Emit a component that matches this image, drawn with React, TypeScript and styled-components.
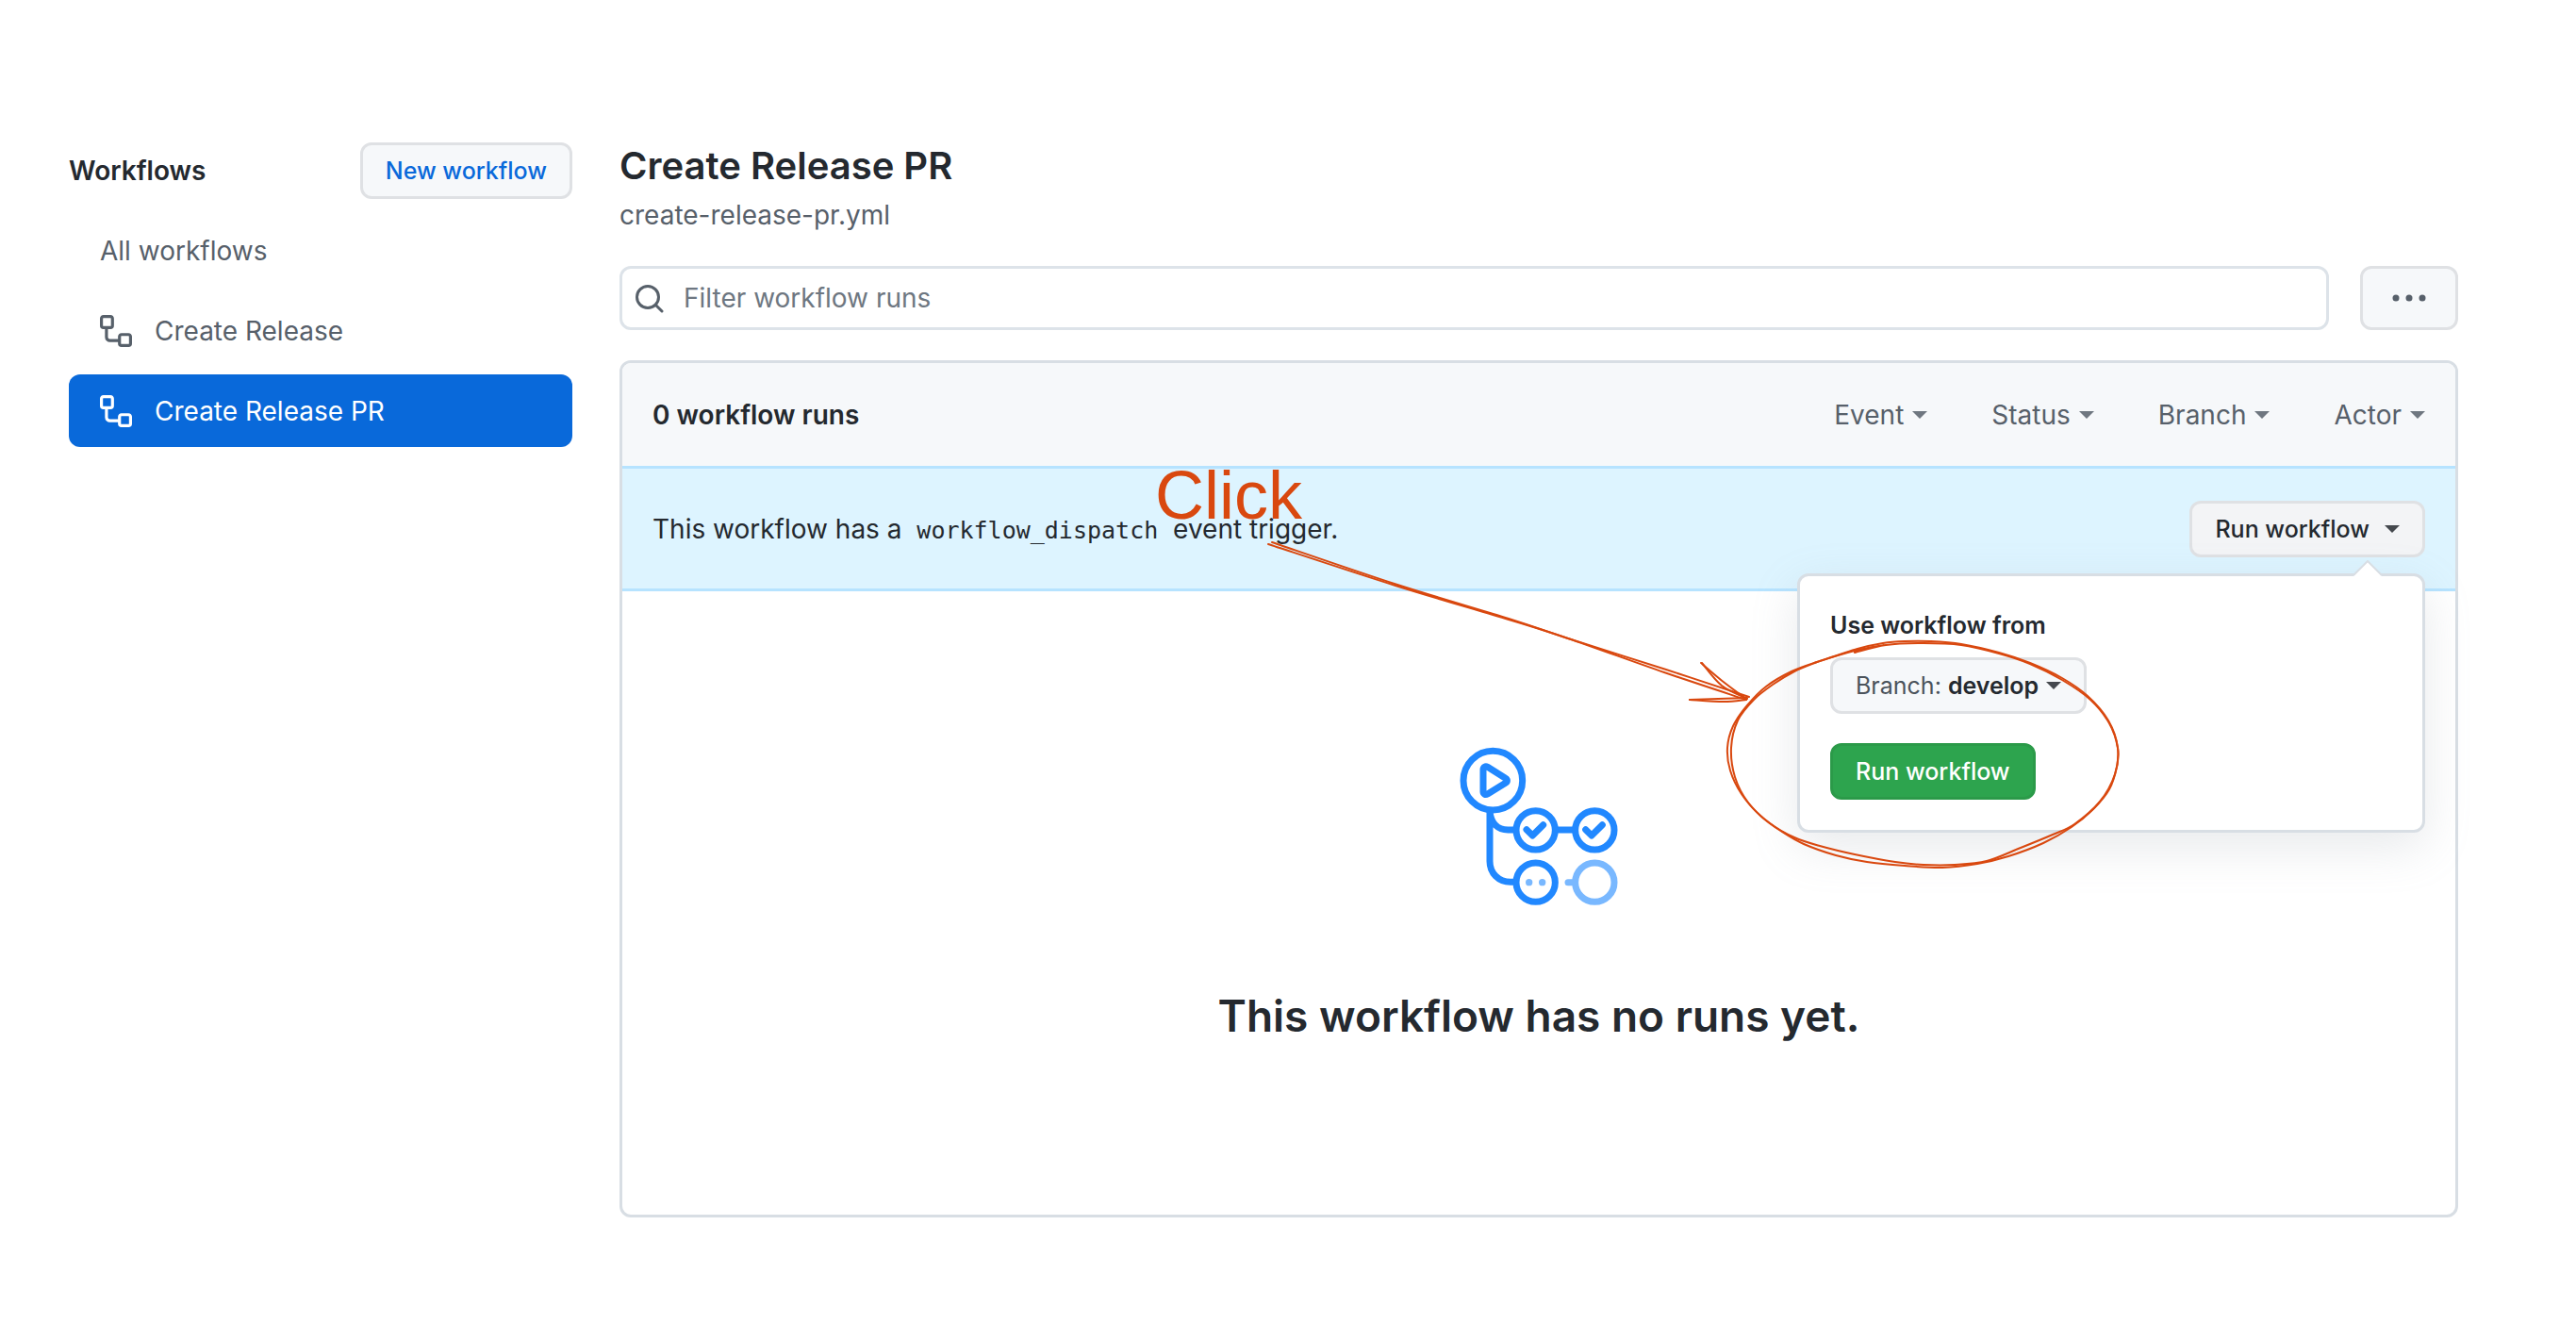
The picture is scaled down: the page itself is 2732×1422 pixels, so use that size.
import React from "react";
import styled, { createGlobalStyle } from "styled-components";

const Global = createGlobalStyle`
  *, *::before, *::after { box-sizing: border-box; }
  body { margin: 0; background: #fff; color: #24292f; font: 28px/42px Inter, "Noto Sans", sans-serif; }
  h1, h2, p, ul { margin: 0; padding: 0; }
  button, input { font: inherit; color: inherit; }
`;

const Page = styled.div`
  position: relative;
  display: grid;
  grid-template-columns: 534px minmax(0, 1fr);
  gap: 50px;
  padding: 151px 125px 132px 73px;
`;

const SideHead = styled.div`
  display: flex;
  align-items: center;
  justify-content: space-between;
  height: 60px;
  margin-bottom: 16px;
`;

const SideTitle = styled.h2`
  font-size: 28px;
  font-weight: 600;
`;

const Button = styled.button<{ $tone?: "link" | "green" | "muted" | "hover" }>`
  display: inline-flex;
  align-items: center;
  gap: ${(p) => (p.$tone === "muted" ? 8 : 16)}px;
  height: 60px;
  padding: 0 24px;
  border: 3px solid ${(p) => (p.$tone === "green" ? "#2b9a49" : "#dfe1e4")};
  border-radius: 12px;
  background: ${(p) => (p.$tone === "green" ? "#2da44e" : p.$tone === "hover" ? "#f3f4f6" : "#f6f8fa")};
  color: ${(p) => (p.$tone === "green" ? "#fff" : p.$tone === "link" ? "#0969da" : "#24292f")};
  font-size: 25px;
  font-weight: ${(p) => (p.$tone === "muted" ? 400 : 500)};
  white-space: nowrap;
`;

const NavList = styled.ul`
  display: flex;
  flex-direction: column;
  gap: 8px;
  list-style: none;
`;

const NavLink = styled.a<{ $active?: boolean }>`
  display: flex;
  align-items: center;
  gap: 24px;
  height: 77px;
  padding: 0 33px;
  border-radius: 12px;
  background: ${(p) => (p.$active ? "#0969da" : "transparent")};
  color: ${(p) => (p.$active ? "#fff" : "#57606a")};
  text-decoration: none;
`;

const Title = styled.h1`
  font-size: 40px;
  line-height: 50px;
  font-weight: 600;
`;

const FileName = styled.p`
  margin-top: 6px;
  color: #57606a;
`;

const FilterRow = styled.div`
  display: flex;
  gap: 33px;
  margin-top: 33px;
`;

const SearchBox = styled.label`
  display: flex;
  flex: 1;
  align-items: center;
  gap: 20px;
  height: 68px;
  padding: 0 14px;
  border: 3px solid #dde3e9;
  border-radius: 12px;
  color: #57606a;
`;

const SearchInput = styled.input`
  flex: 1;
  min-width: 0;
  padding: 0;
  border: 0;
  outline: 0;
  background: transparent;
  &::placeholder { color: #6e7781; opacity: 1; }
`;

const MoreButton = styled.button`
  display: grid;
  place-items: center;
  width: 104px;
  border: 3px solid #dfe1e4;
  border-radius: 12px;
  background: #f6f8fa;
  color: #57606a;
`;

const RunsBox = styled.section`
  margin-top: 32px;
  border: 3px solid #d8dee4;
  border-radius: 12px;
`;

const BoxHead = styled.div`
  display: flex;
  align-items: center;
  justify-content: space-between;
  height: 109px;
  padding: 0 32px;
  border-radius: 9px 9px 0 0;
  background: #f6f8fa;
`;

const Count = styled.strong`
  font-weight: 600;
`;

const Filters = styled.div`
  display: flex;
  gap: 68px;
`;

const FilterButton = styled.button`
  display: flex;
  align-items: center;
  gap: 9px;
  padding: 0;
  border: 0;
  background: transparent;
  color: #57606a;
`;

const Caret = styled.span`
  border: 8px solid transparent;
  border-top-color: currentColor;
  border-bottom: 0;
  opacity: 0.85;
`;

const Banner = styled.div`
  position: relative;
  display: flex;
  align-items: center;
  justify-content: space-between;
  height: 133px;
  padding: 0 32px;
  border: solid #b6e3ff;
  border-width: 3px 0;
  background: #ddf4ff;
`;

const Code = styled.code`
  margin: 0 8px;
  font: 25px "DejaVu Sans Mono", monospace;
`;

const Popover = styled.div`
  position: absolute;
  z-index: 1;
  top: 111px;
  right: 32px;
  display: flex;
  flex-direction: column;
  align-items: flex-start;
  width: 666px;
  padding: 32px;
  border: 3px solid #d8dee4;
  border-radius: 12px;
  background: #fff;
  box-shadow: 0 16px 50px rgba(140, 149, 159, 0.2);
`;

const Pointer = styled.svg`
  position: absolute;
  top: -17px;
  right: 42px;
`;

const PopTitle = styled.p`
  margin-bottom: 14px;
  font-size: 25px;
  line-height: 40px;
  font-weight: 600;
`;

const PopButtons = styled.div`
  display: flex;
  flex-direction: column;
  align-items: flex-start;
  gap: 31px;
`;

const Branch = styled.span`
  color: #4b535b;
  & strong { color: #24292f; font-weight: 600; }
`;

const Empty = styled.div`
  display: flex;
  flex-direction: column;
  align-items: center;
  gap: 80px;
  padding: 165px 32px 175px;
`;

const EmptyTitle = styled.h2`
  font-size: 46px;
  line-height: 72px;
  font-weight: 600;
`;

const Sketch = styled.svg`
  position: absolute;
  z-index: 2;
  top: 560px;
  left: 1330px;
  pointer-events: none;
`;

const ClickNote = styled.span`
  position: absolute;
  z-index: 2;
  top: 485px;
  left: 1225px;
  color: #d9480f;
  font: 72px/80px "Liberation Sans", Arial, sans-serif;
`;

const WorkflowIcon = () => (
  <svg width="34" height="34" viewBox="0 0 16 16" fill="currentColor" aria-hidden="true">
    <path fillRule="evenodd" d="M0 1.75C0 .784.784 0 1.75 0h3.5C6.216 0 7 .784 7 1.75v3.5A1.75 1.75 0 015.25 7H4v4a1 1 0 001 1h4v-1.25C9 9.784 9.784 9 10.75 9h3.5c.966 0 1.75.784 1.75 1.75v3.5A1.75 1.75 0 0114.25 16h-3.5A1.75 1.75 0 019 14.25v-.75H5A2.500 2.500 0 012.500 11V7h-.75A1.750 1.750 0 010 5.250v-3.500zm1.750-.250a.25.25 0 00-.25.25v3.500c0 .138.112.25.25.25h3.500a.25.25 0 00.25-.25v-3.500a.25.25 0 00-.25-.25h-3.500zm9 9a.25.25 0 00-.25.25v3.500c0 .138.112.25.25.25h3.500a.25.25 0 00.25-.25v-3.500a.25.25 0 00-.25-.25h-3.500z" />
  </svg>
);

const SearchIcon = () => (
  <svg width="31" height="31" viewBox="0 0 31 31" fill="none" stroke="currentColor" strokeWidth="3" strokeLinecap="round" aria-hidden="true">
    <circle cx="13" cy="14" r="11.500" />
    <path d="M21.500 22.500L28 29" />
  </svg>
);

const RunsGraphic = () => (
  <svg width="168" height="169" viewBox="84 66 504 507" fill="none" stroke="#2188ff" strokeWidth="21" strokeLinecap="round" strokeLinejoin="round" aria-hidden="true">
    <circle cx="190" cy="173" r="94" />
    <path d="M159 138v70c0 8 7 12 14 8l57-35c7-4 7-11 0-15l-57-36c-7-4-14 0-14 8z" />
    <path d="M180 272v158c0 38 28 66 66 66h16M180 272c4 38 26 58 58 58h24M392 330h56" strokeLinecap="butt" />
    <circle cx="326" cy="331" r="62" />
    <circle cx="514" cy="331" r="62" />
    <circle cx="326" cy="497" r="62" />
    <path d="M297 329l19 19 34-34M485 329l19 19 34-34" />
    <g stroke="#79b8ff">
      <circle cx="514" cy="497" r="62" />
      <path d="M429 497h14" />
    </g>
    <g fill="#79b8ff" stroke="none">
      <circle cx="305" cy="497" r="11" />
      <circle cx="347" cy="497" r="11" />
    </g>
  </svg>
);

type Point = [number, number];

const smooth = (pts: Point[]) =>
  pts.slice(1).reduce((d, p, i) => {
    const a = pts[i];
    const before = pts[i - 1] ?? a;
    const after = pts[i + 2] ?? p;
    const c1 = [a[0] + (p[0] - before[0]) / 6, a[1] + (p[1] - before[1]) / 6];
    const c2 = [p[0] - (after[0] - a[0]) / 6, p[1] - (after[1] - a[1]) / 6];
    return `${d}C${c1.join(" ")} ${c2.join(" ")} ${p.join(" ")}`;
  }, `M${pts[0].join(" ")}`);

const strokes: Point[][] = [
  // arrow shaft, drawn twice
  [[1349, 575], [1482, 620], [1600, 656], [1663, 677], [1767, 710], [1855, 739]],
  [[1345, 577], [1480, 621], [1600, 657], [1663, 677], [1765, 713], [1852, 742]],
  // arrow head
  [[1804, 703], [1829, 724], [1852, 741]],
  [[1805, 703], [1826, 727], [1853, 741]],
  [[1792, 742], [1828, 744], [1852, 742]],
  [[1792, 742], [1853, 740]],
  // ring, drawn twice
  [[1967, 692], [2000, 684], [2040, 682], [2080, 684], [2120, 693], [2153, 704], [2187, 721], [2217, 742], [2237, 767], [2246, 793], [2245, 813], [2237, 837], [2220, 858], [2197, 877], [2167, 894], [2130, 908], [2097, 916], [2060, 920], [2020, 918], [1980, 914], [1947, 907], [1913, 895], [1890, 882], [1867, 865], [1847, 842], [1835, 817], [1832, 793], [1838, 770], [1853, 748], [1873, 728], [1900, 712], [1927, 702], [1967, 690], [1998, 684]],
  [[1927, 702], [1970, 688], [1997, 682], [2020, 680], [2047, 680], [2080, 683], [2120, 692], [2153, 703], [2187, 719], [2214, 738], [2236, 764], [2246, 793], [2243, 821], [2227, 850], [2200, 874], [2177, 885], [2143, 899], [2107, 913], [2073, 917], [2040, 917], [2010, 914], [1967, 906], [1930, 897], [1903, 888], [1877, 873], [1854, 851], [1840, 824], [1836, 793], [1843, 764], [1860, 742], [1880, 726], [1903, 712], [1927, 702]],
];

const navItems = [
  { label: "All workflows", icon: false },
  { label: "Create Release", icon: true },
  { label: "Create Release PR", icon: true, active: true },
];

export default function App() {
  return (
    <Page>
      <Global />
      <aside>
        <SideHead>
          <SideTitle>Workflows</SideTitle>
          <Button $tone="link">New workflow</Button>
        </SideHead>
        <nav>
          <NavList>
            {navItems.map((item) => (
              <li key={item.label}>
                <NavLink href="#" $active={item.active}>
                  {item.icon && <WorkflowIcon />}
                  {item.label}
                </NavLink>
              </li>
            ))}
          </NavList>
        </nav>
      </aside>
      <main>
        <Title>Create Release PR</Title>
        <FileName>create-release-pr.yml</FileName>
        <FilterRow>
          <SearchBox>
            <SearchIcon />
            <SearchInput type="text" placeholder="Filter workflow runs" aria-label="Filter workflow runs" />
          </SearchBox>
          <MoreButton aria-label="More options">
            <svg width="36" height="8" viewBox="0 0 36 8" fill="currentColor">
              <circle cx="4" cy="4" r="3.500" />
              <circle cx="18" cy="4" r="3.500" />
              <circle cx="32" cy="4" r="3.500" />
            </svg>
          </MoreButton>
        </FilterRow>
        <RunsBox>
          <BoxHead>
            <Count>0 workflow runs</Count>
            <Filters>
              {["Event", "Status", "Branch", "Actor"].map((name) => (
                <FilterButton key={name}>
                  {name}
                  <Caret />
                </FilterButton>
              ))}
            </Filters>
          </BoxHead>
          <Banner>
            <p>
              This workflow has a <Code>workflow_dispatch</Code> event trigger.
            </p>
            <Button $tone="hover">
              Run workflow
              <Caret />
            </Button>
            <Popover>
              <Pointer width="32" height="18" viewBox="0 0 32 18">
                <path d="M0 18L16 1l16 17z" fill="#fff" />
                <path d="M1 16L16 1l15 15" fill="none" stroke="#d8dee4" strokeWidth="2" />
              </Pointer>
              <PopTitle>Use workflow from</PopTitle>
              <PopButtons>
                <Button $tone="muted">
                  <Branch>
                    Branch: <strong>develop</strong>
                  </Branch>
                  <Caret />
                </Button>
                <Button $tone="green">Run workflow</Button>
              </PopButtons>
            </Popover>
          </Banner>
          <Empty>
            <RunsGraphic />
            <EmptyTitle>This workflow has no runs yet.</EmptyTitle>
          </Empty>
        </RunsBox>
      </main>
      <ClickNote>Click</ClickNote>
      <Sketch width="930" height="370" viewBox="1330 560 930 370" fill="none" stroke="#d9480f" strokeWidth="2" strokeLinecap="round" aria-hidden="true">
        {strokes.map((points, i) => (
          <path key={i} d={smooth(points)} />
        ))}
      </Sketch>
    </Page>
  );
}
